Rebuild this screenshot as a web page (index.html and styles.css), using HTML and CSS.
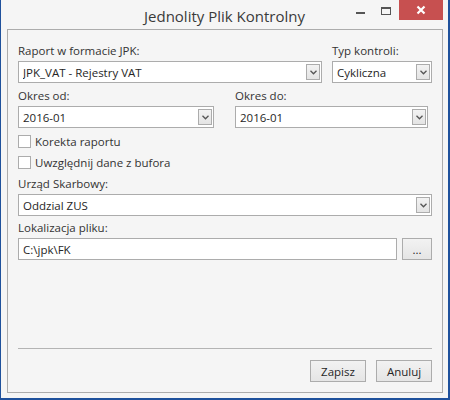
FILE: index.html
```html
<!DOCTYPE html>
<html>
<head>
<meta charset="utf-8">
<link rel="stylesheet" href="styles.css">
</head>
<body>
<div class="window">
  <div class="titlebar">
    <div class="title">Jednolity Plik Kontrolny</div>
    <div class="controls">
      <div class="ctl ctl-min"><span class="min-bar"></span></div>
      <div class="ctl ctl-max"><span class="max-box"></span></div>
      <div class="ctl ctl-close">
        <svg width="10" height="10" viewBox="0 0 10 10"><path d="M1.5 1.5 L8.5 8.5 M8.5 1.5 L1.5 8.5" stroke="#fff" stroke-width="2.2" fill="none"/></svg>
      </div>
    </div>
  </div>
  <div class="panel">
    <div class="row row-first">
      <div class="field">
        <div class="label">Raport w formacie JPK:</div>
        <div class="select"><span class="value">JPK_VAT - Rejestry VAT</span><span class="arrow"><svg width="7" height="5" viewBox="0 0 7 5"><path d="M0.5 0.8 L3.5 3.8 L6.5 0.8" stroke="#555" stroke-width="1.3" fill="none"/></svg></span></div>
      </div>
      <div class="field">
        <div class="label">Typ kontroli:</div>
        <div class="select"><span class="value">Cykliczna</span><span class="arrow"><svg width="7" height="5" viewBox="0 0 7 5"><path d="M0.5 0.8 L3.5 3.8 L6.5 0.8" stroke="#555" stroke-width="1.3" fill="none"/></svg></span></div>
      </div>
    </div>
    <div class="row row-dates">
      <div class="field">
        <div class="label">Okres od:</div>
        <div class="select"><span class="value">2016-01</span><span class="arrow"><svg width="7" height="5" viewBox="0 0 7 5"><path d="M0.5 0.8 L3.5 3.8 L6.5 0.8" stroke="#555" stroke-width="1.3" fill="none"/></svg></span></div>
      </div>
      <div class="field">
        <div class="label">Okres do:</div>
        <div class="select"><span class="value">2016-01</span><span class="arrow"><svg width="7" height="5" viewBox="0 0 7 5"><path d="M0.5 0.8 L3.5 3.8 L6.5 0.8" stroke="#555" stroke-width="1.3" fill="none"/></svg></span></div>
      </div>
    </div>
    <div class="checks">
      <div class="check"><span class="box"></span><span>Korekta raportu</span></div>
      <div class="check"><span class="box"></span><span>Uwzględnij dane z bufora</span></div>
    </div>
    <div class="field field-office">
      <div class="label">Urząd Skarbowy:</div>
      <div class="select"><span class="value">Oddzial ZUS</span><span class="arrow"><svg width="7" height="5" viewBox="0 0 7 5"><path d="M0.5 0.8 L3.5 3.8 L6.5 0.8" stroke="#555" stroke-width="1.3" fill="none"/></svg></span></div>
    </div>
    <div class="field field-path">
      <div class="label">Lokalizacja pliku:</div>
      <div class="path-row">
        <div class="input"><span class="value">C:\jpk\FK</span></div>
        <div class="btn btn-browse">...</div>
      </div>
    </div>
    <div class="separator"></div>
    <div class="actions">
      <div class="btn btn-action">Zapisz</div>
      <div class="btn btn-action">Anuluj</div>
    </div>
  </div>
</div>
</body>
</html>
```
FILE: styles.css
```css
* { box-sizing: border-box; }
html, body { margin: 0; padding: 0; }
body {
  width: 450px;
  height: 400px;
  overflow: hidden;
  font-family: "Open Sans", "Noto Sans", sans-serif;
  font-size: 11.5px;
  color: #333;
}
.window {
  width: 450px;
  height: 400px;
  background: #f5f5f5;
  border-left: 1px solid #1f519c;
  border-right: 2px solid #1f519c;
  border-bottom: 2px solid #1f519c;
  display: flex;
  flex-direction: column;
}
.titlebar {
  height: 29px;
  flex: none;
  display: grid;
  grid-template-columns: 1fr auto 1fr;
}
.title {
  grid-column: 2;
  font-size: 15px;
  line-height: 20px;
  padding-top: 6px;
  color: #3a3a3a;
  white-space: nowrap;
}
.controls {
  grid-column: 3;
  justify-self: end;
  display: flex;
  height: 20px;
  margin-right: 5px;
}
.ctl {
  height: 20px;
  display: flex;
  justify-content: center;
}
.ctl-min { width: 26px; }
.ctl-max { width: 26px; }
.ctl-close {
  width: 44px;
  background: #c75050;
  align-items: center;
}
.min-bar {
  width: 9px;
  height: 2px;
  margin-top: 12px;
  background: #555;
}
.max-box {
  width: 10px;
  height: 8px;
  margin-top: 7px;
  border: 1px solid #555;
  border-top-width: 2px;
}
.panel {
  flex: 1;
  margin: 0 5px 5px 6px;
  border: 1px solid #acacac;
  padding: 12px 10px 10px 10px;
  display: flex;
  flex-direction: column;
}
.row {
  display: grid;
}
.row-first {
  grid-template-columns: 1fr 100px;
  column-gap: 10px;
}
.row-dates {
  grid-template-columns: 196px 193px;
  column-gap: 21px;
  margin-top: 4px;
}
.label {
  line-height: 18px;
  height: 19px;
  white-space: nowrap;
}
.select, .input {
  height: 22px;
  background: #fff;
  border: 1px solid #acacac;
  display: flex;
  align-items: center;
  padding-left: 4px;
  white-space: nowrap;
}
.value {
  flex: 1;
  color: #262626;
  overflow: hidden;
}
.arrow {
  width: 14px;
  height: 16px;
  margin-right: 1px;
  border: 1px solid #acacac;
  background: linear-gradient(#f3f3f3, #e4e4e4);
  display: flex;
  align-items: center;
  justify-content: center;
}
.arrow svg { display: block; margin-top: 1px; }
.checks {
  margin-top: 3px;
  display: flex;
  flex-direction: column;
}
.check {
  height: 21px;
  display: flex;
  align-items: center;
  gap: 4px;
}
.box {
  width: 13px;
  height: 13px;
  border: 1px solid #acacac;
  background: #fff;
}
.field-office { margin-top: 2px; }
.field-path { margin-top: 3px; }
.path-row {
  display: flex;
  gap: 5px;
}
.path-row .input { flex: 1; }
.btn {
  height: 22px;
  border: 1px solid #acacac;
  background: linear-gradient(#f2f2f2, #e5e5e5);
  display: flex;
  align-items: center;
  justify-content: center;
  color: #262626;
}
.btn-browse { width: 30px; }
.separator {
  margin-top: auto;
  height: 1px;
  background: #b4b4b4;
}
.actions {
  margin-top: 11px;
  display: flex;
  justify-content: flex-end;
  gap: 10px;
}
.btn-action { width: 56px; }
```
